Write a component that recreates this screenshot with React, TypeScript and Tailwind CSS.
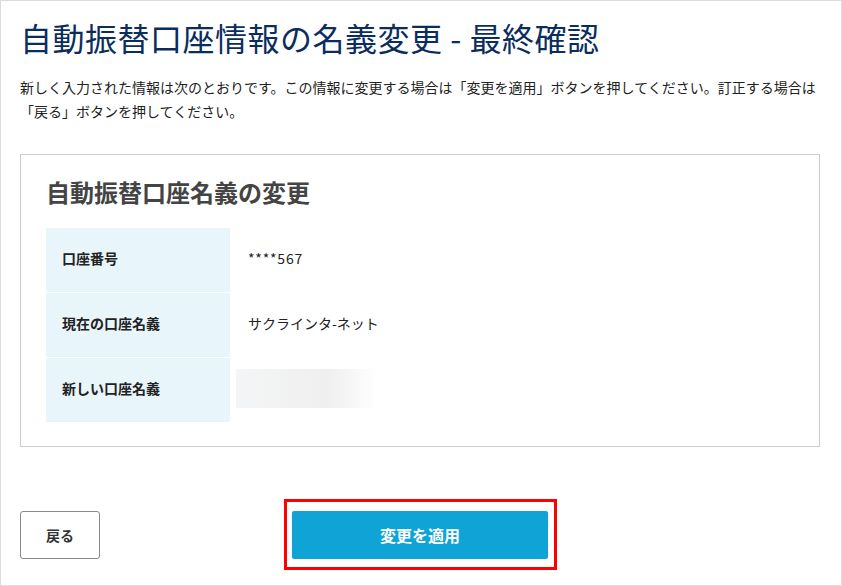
import React from "react";

const font = { fontFamily: '"Noto Sans CJK JP", "Noto Sans", sans-serif' };

export default function App() {
  return (
    <div
      style={font}
      className="w-[842px] h-[586px] border border-[#dcdcdc] bg-white pl-[19px] pr-[21px] pt-[16px] box-border overflow-hidden"
    >
      <h1 className="text-[32px] leading-[40px] text-[#0b2d5e] font-normal whitespace-nowrap tracking-[0.5px]">
        自動振替口座情報の名義変更 - 最終確認
      </h1>
      <p className="mt-[18px] text-[14px] leading-[24px] text-[#222]">
        新しく入力された情報は次のとおりです。この情報に変更する場合は「変更を適用」ボタンを押してください。訂正する場合は「戻る」ボタンを押してください。
      </p>

      <div className="mt-[31px] w-[800px] border border-[#cccccc] pt-[21px] px-[25px] pb-[24px]">
        <h2 className="text-[24px] leading-[32px] font-bold text-[#444]">自動振替口座名義の変更</h2>
        <div className="mt-[20px] flex flex-col">
          <div className="flex h-[64px]">
            <div className="w-[184px] bg-[#e8f6fc] flex items-center pl-[16px] pb-[3px] text-[14px] font-bold text-[#222]">
              口座番号
            </div>
            <div className="flex items-center pl-[18px] pb-[3px] text-[14px] text-[#222] tracking-[0.8px]">****567</div>
          </div>
          <div className="flex h-[65px] border-t border-white">
            <div className="w-[184px] bg-[#e8f6fc] flex items-center pl-[16px] pb-[3px] text-[14px] font-bold text-[#222]">
              現在の口座名義
            </div>
            <div className="flex items-center pl-[18px] pb-[3px] text-[14px] text-[#222]">サクラインタ-ネット</div>
          </div>
          <div className="flex h-[65px] border-t border-white">
            <div className="w-[184px] bg-[#e8f6fc] flex items-center pl-[16px] pb-[3px] text-[14px] font-bold text-[#222]">
              新しい口座名義
            </div>
            <div className="flex items-center pl-[6px] pb-[3px]">
              <div className="w-[141px] h-[39px] bg-[linear-gradient(to_right,#f4f5f6_0%,#efefef_65%,#ffffff_100%)]" />
            </div>
          </div>
        </div>
      </div>

      <div className="mt-[64px] w-[800px] grid grid-cols-[1fr_auto_1fr] items-center">
        <div>
          <button className="w-[80px] h-[48px] border border-[#8a8a8a] rounded-[3px] bg-white text-[14px] font-bold text-[#333] flex items-center justify-center">
            戻る
          </button>
        </div>
        <div className="relative">
          <div className="absolute -left-[8px] -top-[12px] -right-[9px] -bottom-[11px] border-[3px] border-[#ff0000] pointer-events-none" />
          <button className="relative w-[256px] h-[48px] rounded-[2px] bg-[#0fa3d6] text-white text-[16px] font-bold flex items-center justify-center">
            変更を適用
          </button>
        </div>
        <div />
      </div>
    </div>
  );
}
